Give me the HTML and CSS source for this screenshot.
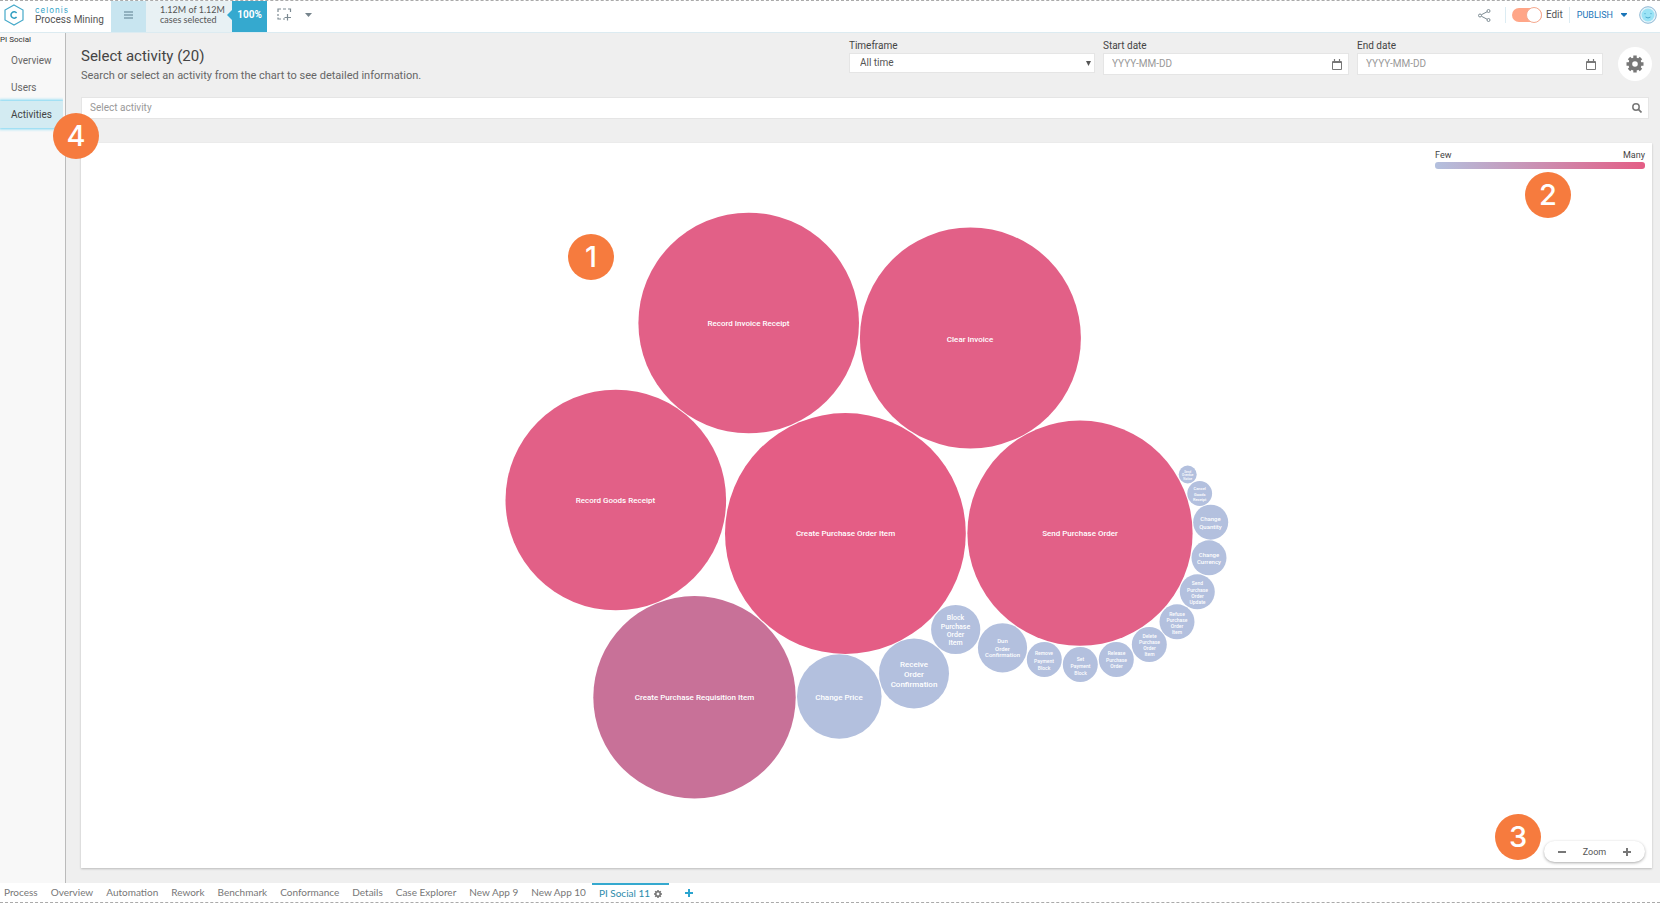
FILE: index.html
```html
<!DOCTYPE html>
<html lang="en">
<head>
<meta charset="utf-8">
<title>PI Social - Activities</title>
<link rel="stylesheet" href="styles.css">
</head>
<body>
<div class="app">
  <header class="topbar">
    <a class="brand" href="#">
      <svg class="brand-mark" viewBox="0 0 20 22" aria-hidden="true"><path d="M10 1 L19 6 V16 L10 21 L1 16 V6 Z" fill="none" stroke="#45a9c9" stroke-width="1.2"/><path d="M12.6 8.9 A3.2 3.2 0 1 0 12.6 13.1" fill="none" stroke="#2f9dc0" stroke-width="1.5"/></svg>
      <span class="brand-text"><span class="brand-name">celonis</span><span>Process Mining</span></span>
    </a>
    <button class="menu" aria-label="Menu"><svg width="9" height="8" viewBox="0 0 9 8"><path d="M0 1H9M0 4H9M0 7H9" stroke="#5b7f8e" stroke-width="1.2"/></svg></button>
    <div class="cases"><strong>1.12M of 1.12M</strong><span>cases selected</span></div>
    <div class="percent">100%</div>
    <button class="tool" aria-label="Selection"><svg width="15" height="13" viewBox="0 0 15 13"><path d="M1 4V1H4M6 1H9M11 1H13.500V4M1 6V8M1 9.500V11H4M6 11H8M10.500 6V12.500M7.500 9.500H14" fill="none" stroke="#7c8a92" stroke-width="1.200"/></svg></button>
    <button class="tool" aria-label="Selection options"><svg width="7" height="4" viewBox="0 0 7 4"><path d="M0 0H7L3.500 4Z" fill="#76848c"/></svg></button>
    <div class="top-actions">
      <button class="share" aria-label="Share"><svg width="13" height="13" viewBox="0 0 13 13"><path d="M3.500 5.700L9 2.800M3.500 7.300L9 10.200" stroke="#7c8a92"/><circle cx="2" cy="6.500" r="1.500" fill="none" stroke="#7c8a92"/><circle cx="10.500" cy="2" r="1.500" fill="none" stroke="#7c8a92"/><circle cx="10.500" cy="11" r="1.500" fill="none" stroke="#7c8a92"/></svg></button>
      <label class="edit"><input type="checkbox" checked><span>Edit</span></label>
      <button class="publish">PUBLISH <svg width="6" height="4" viewBox="0 0 6 4"><path d="M0 0H6V1L3 4L0 1Z" fill="#1a75b8"/></svg></button>
      <button class="avatar" aria-label="Account"><svg width="18" height="18" viewBox="0 0 18 18"><circle cx="9" cy="9" r="8.300" fill="#e4f3fa" stroke="#8fb8d4"/><circle cx="9" cy="9" r="6.500" fill="#9be3f5"/><path d="M6 7V8.200M12 7V8.200M6.500 11Q9 13 11.500 11" fill="none" stroke="#4ba9ce"/></svg></button>
    </div>
  </header>

  <div class="body">
    <nav class="side" aria-label="Sections">
      <span class="side-title">PI Social</span>
      <a href="#">Overview</a>
      <a href="#">Users</a>
      <a href="#" class="active" aria-current="page">Activities</a>
    </nav>

    <main class="main">
      <div class="heading">
        <div class="titles">
          <h1>Select activity (20)</h1>
          <p>Search or select an activity from the chart to see detailed information.</p>
        </div>
        <div class="filters">
          <div class="field"><label for="timeframe">Timeframe</label>
            <div class="box short"><select id="timeframe"><option>All time</option></select><svg width="5" height="5" viewBox="0 0 5 5"><path d="M0 0H5L2.500 5Z" fill="#555"/></svg></div></div>
          <div class="field"><label for="start">Start date</label>
            <div class="box"><input id="start" type="text" placeholder="YYYY-MM-DD"><svg width="10" height="11" viewBox="0 0 10 11"><path d="M.5 2.500H9.500V10.500H.5Z" fill="none" stroke="#777"/><path d="M.5 3.500H9.500M2.500 0V3M7.500 0V3" stroke="#777" stroke-width="1.200"/></svg></div></div>
          <div class="field"><label for="end">End date</label>
            <div class="box"><input id="end" type="text" placeholder="YYYY-MM-DD"><svg width="10" height="11" viewBox="0 0 10 11"><path d="M.5 2.500H9.500V10.500H.5Z" fill="none" stroke="#777"/><path d="M.5 3.500H9.500M2.500 0V3M7.500 0V3" stroke="#777" stroke-width="1.200"/></svg></div></div>
        </div>
        <button class="settings" aria-label="Settings"><svg width="18" height="18" viewBox="-9 -9 18 18"><circle r="4.700" fill="none" stroke="#777" stroke-width="3.800"/><path d="M0 -8.500V-5M0 5V8.500M-8.500 0H-5M5 0H8.500M-6 -6L-4 -4M4 4L6 6M-6 6L-4 4M4 -4L6 -6" stroke="#777" stroke-width="3.400"/></svg></button>
      </div>

      <div class="search">
        <input type="text" aria-label="Select activity" placeholder="Select activity">
        <svg width="10" height="10" viewBox="0 0 10 10"><circle cx="4" cy="4" r="3.200" fill="none" stroke="#777" stroke-width="1.500"/><path d="M6.400 6.400L9.500 9.500" stroke="#777" stroke-width="1.700"/></svg>
      </div>

      <section class="panel" aria-label="Activity chart">
        <svg class="chart" viewBox="81 144 1571 724" role="img" aria-label="Activities by frequency">
          <g class="many">
            <circle cx="748.700" cy="323.500" r="110.300"/><circle cx="970.400" cy="338.500" r="110.500"/>
            <circle cx="615.800" cy="500.500" r="110.300"/><circle class="top" cx="845.400" cy="534" r="120.400"/>
            <circle cx="1080" cy="533.700" r="112.600"/><circle class="mid" cx="694.500" cy="697.700" r="101.200"/>
          </g>
          <g class="few">
            <circle cx="839.300" cy="697" r="42.300"/><circle cx="914" cy="674" r="35"/>
            <circle cx="955.700" cy="630" r="24.600"/><circle cx="1002.500" cy="648.300" r="24.600"/>
            <circle cx="1044.300" cy="660" r="17.500"/><circle cx="1080.300" cy="665" r="17.500"/>
            <circle cx="1116.300" cy="660" r="17.500"/><circle cx="1149.300" cy="645" r="17.500"/>
            <circle cx="1177" cy="622.300" r="17.500"/><circle cx="1197.300" cy="592.300" r="17.500"/>
            <circle cx="1209" cy="558.300" r="17.500"/><circle cx="1210.700" cy="522.700" r="17.500"/>
            <circle cx="1199.700" cy="494" r="12.400"/><circle cx="1187.700" cy="475" r="9"/>
          </g>
          <g class="label l8">
            <text x="748.500" y="326">Record Invoice Receipt</text><text x="970" y="342">Clear Invoice</text>
            <text x="615.500" y="503">Record Goods Receipt</text><text x="845.500" y="536">Create Purchase Order Item</text>
            <text x="1080" y="536">Send Purchase Order</text><text x="694.500" y="700">Create Purchase Requisition Item</text>
            <text x="839" y="700">Change Price</text>
            <text x="914" y="667">Receive</text><text x="914" y="677">Order</text><text x="914" y="687">Confirmation</text>
          </g>
          <g class="label l7">
            <text x="955.500" y="620">Block</text><text x="955.500" y="629">Purchase</text><text x="955.500" y="637">Order</text><text x="955.500" y="645">Item</text>
          </g>
          <g class="label l6">
            <text x="1002.500" y="643">Dun</text><text x="1002.500" y="651">Order</text><text x="1002.500" y="657">Confirmation</text>
            <text x="1210.500" y="521">Change</text><text x="1210.500" y="529">Quantity</text>
            <text x="1209" y="557">Change</text><text x="1209" y="564">Currency</text>
          </g>
          <g class="label l5">
            <text x="1044" y="655">Remove</text><text x="1044" y="663">Payment</text><text x="1044" y="670">Block</text>
            <text x="1080.500" y="661">Set</text><text x="1080.500" y="668">Payment</text><text x="1080.500" y="675">Block</text>
            <text x="1116.500" y="655">Release</text><text x="1116.500" y="662">Purchase</text><text x="1116.500" y="668">Order</text>
            <text x="1149.500" y="638">Delete</text><text x="1149.500" y="644">Purchase</text><text x="1149.500" y="650">Order</text><text x="1149.500" y="656">Item</text>
            <text x="1177" y="616">Refuse</text><text x="1177" y="622">Purchase</text><text x="1177" y="628">Order</text><text x="1177" y="634">Item</text>
            <text x="1197.500" y="585">Send</text><text x="1197.500" y="592">Purchase</text><text x="1197.500" y="598">Order</text><text x="1197.500" y="604">Update</text>
          </g>
          <g class="label l4"><text x="1199.700" y="490">Cancel</text><text x="1199.700" y="496">Goods</text><text x="1199.700" y="501">Receipt</text></g>
          <g class="label l3"><text x="1187.700" y="473">Send</text><text x="1187.700" y="476">Overdue</text><text x="1187.700" y="480">Notice</text></g>
        </svg>
        <div class="legend"><div class="legend-labels"><span>Few</span><span>Many</span></div><div class="legend-bar"></div></div>
        <div class="zoom">
          <button aria-label="Zoom out"><svg width="8" height="8" viewBox="0 0 8 8"><path d="M0 4H8" stroke="#777" stroke-width="2"/></svg></button>
          <span>Zoom</span>
          <button aria-label="Zoom in"><svg width="8" height="8" viewBox="0 0 8 8"><path d="M0 4H8M4 0V8" stroke="#777" stroke-width="2"/></svg></button>
        </div>
        <span class="callout c1">1</span><span class="callout c2">2</span><span class="callout c3">3</span>
      </section>
    </main>
    <span class="callout c4">4</span>
  </div>

  <footer class="tabs">
    <a href="#">Process</a><a href="#">Overview</a><a href="#">Automation</a><a href="#">Rework</a><a href="#">Benchmark</a><a href="#">Conformance</a><a href="#">Details</a><a href="#">Case Explorer</a><a href="#">New App 9</a><a href="#">New App 10</a>
    <a href="#" class="active">PI Social 11 <svg width="8" height="8" viewBox="-4 -4 8 8"><circle r="2.300" fill="none" stroke="#777" stroke-width="1.700"/><path d="M0 -4V-2.500M0 2.500V4M-4 0H-2.500M2.500 0H4M-2.800 -2.800L-2 -2M2 2L2.800 2.800M-2.800 2.800L-2 2M2 -2L2.800 -2.800" stroke="#777" stroke-width="1.500"/></svg></a>
    <button aria-label="Add sheet"><svg width="8" height="8" viewBox="0 0 8 8"><path d="M0 4H8M4 0V8" stroke="#2ba4cf" stroke-width="2"/></svg></button>
  </footer>
</div>
</body>
</html>
```
FILE: styles.css
```css
* { box-sizing: border-box; }
body { margin: 0; font: 10px/12px Roboto, "Open Sans", sans-serif; color: #555; background: #fff; }
button, input, select { font: inherit; color: inherit; border: 0; padding: 0; margin: 0; background: none; outline: 0; }
a { color: inherit; text-decoration: none; }
svg { display: block; flex: none; }

.app { min-height: 100vh; display: flex; flex-direction: column; border-top: 1px dashed #aaa; border-bottom: 1px dashed #aaa; }

.topbar { display: flex; align-items: stretch; height: 32px; border-bottom: 1px solid #dcebf1; }
.brand { width: 111px; display: flex; align-items: center; gap: 11px; padding-left: 4px; padding-bottom: 3px; }
.brand-mark { width: 20px; height: 22px; }
.brand-text { display: flex; flex-direction: column; line-height: 10px; white-space: nowrap; }
.brand-name { font-family: "Inter", sans-serif; color: #35a5c9; letter-spacing: 1px; font-size: 8px; line-height: 9px; }
.menu { width: 35px; display: grid; place-items: center; padding-bottom: 3px; background: #c8e5f0; }
.cases { width: 86px; padding: 4px 0 0 14px; display: flex; flex-direction: column; background: #e8f1f4; line-height: 10px; white-space: nowrap; font-family: Lato, sans-serif; font-size: 9px; }
.cases strong { font-weight: 400; }
.percent { position: relative; width: 35px; display: grid; place-items: center; padding-bottom: 3px; background: #35a9cf; color: #fff; font-weight: 700; }
.percent::before { content: ""; position: absolute; left: -5px; top: 9px; border: 5px solid transparent; border-left: 0; border-right-color: #35a9cf; }
.tool { width: 24px; margin-left: 5px; display: grid; place-items: center; padding-bottom: 4px; }
.tool + .tool { margin-left: 0; }
.top-actions { margin-left: auto; display: flex; align-items: center; padding-right: 3px; padding-bottom: 3px; }
.share { margin-right: 14px; }
.edit { display: flex; align-items: center; gap: 4px; height: 16px; padding: 0 6px; border: solid #dcecf3; border-width: 0 1px; }
.edit input { appearance: none; width: 30px; height: 14px; border-radius: 7px; background: #ffa688; display: flex; justify-content: flex-end; align-items: center; }
.edit input::after { content: ""; width: 14px; height: 14px; border-radius: 50%; background: #fff; border: 1px solid #f5a98f; }
.publish { display: flex; align-items: center; gap: 8px; padding: 0 12px 0 7px; color: #1a75b8; font-size: 9px; }

.body { position: relative; flex: 1; display: flex; }
.side { width: 66px; flex: none; display: flex; flex-direction: column; background: #f8f8f8; border-right: 1px solid #bbb; }
.side-title { font-size: 8px; line-height: 14px; color: #333; }
.side a { height: 27px; line-height: 28px; padding-left: 11px; color: #666; }
.side a.active { background: #d3ebf2; color: #444; box-shadow: 0 0 3px 1px #6fd2f2; clip-path: inset(-4px 0); margin-right: 2px; }

.main { flex: 1; min-width: 0; display: flex; flex-direction: column; background: #efefef; padding: 6px 8px 15px 15px; }
.heading { display: flex; align-items: flex-start; }
.titles { flex: 1; padding-top: 8px; }
h1 { margin: 0; font-weight: 400; font-size: 15px; line-height: 18px; color: #444; }
p { margin: 0; padding-top: 4px; font-size: 11px; line-height: 14px; color: #666; }
.filters { width: 48%; display: flex; gap: 8px; }
.field { flex: 1; min-width: 0; }
.field label { display: block; line-height: 14px; color: #444; }
.box { height: 22px; display: flex; align-items: center; padding: 0 6px 0 8px; background: #fff; border: 1px solid #e5e5e5; }
.box.short { height: 20px; padding: 0 3px 0 10px; }
.box input, .box select { flex: 1; min-width: 0; appearance: none; }
::placeholder { color: #999; opacity: 1; }
.settings { width: 34px; height: 34px; margin: 8px 0 0 15px; border-radius: 50%; background: #fff; display: grid; place-items: center; }
.search { display: flex; align-items: center; height: 22px; margin: 14px 3px 24px 0; padding: 0 6px 0 8px; background: #fff; border: 1px solid #e5e5e5; }
.search input { flex: 1; }

.panel { position: relative; flex: 1; background: #fff; box-shadow: 0 1px 2px #bbb; }
.chart { position: absolute; inset: 0; width: 100%; height: 100%; }
.many { fill: #e26087; }
.many .top { fill: #e45d85; }
.many .mid { fill: #c87198; }
.few { fill: #b3c0de; }
.label { fill: #fff; text-anchor: middle; font-weight: 500; }
.l8 { font-size: 8px; }
.l7 { font-size: 7px; }
.l6 { font-size: 6px; }
.l5 { font-size: 5px; }
.l4 { font-size: 4px; }
.l3 { font-size: 3px; }
.legend { position: absolute; top: 6px; right: 7px; width: 210px; font-size: 9px; color: #444; }
.legend-labels { display: flex; justify-content: space-between; }
.legend-bar { height: 7px; margin-top: 1px; border-radius: 3px; background: linear-gradient(90deg, #b3c0de, #e45d85); }
.zoom { position: absolute; right: 7px; bottom: 6px; width: 101px; height: 21px; padding: 0 14px; display: flex; align-items: center; justify-content: space-between; border-radius: 11px; background: #fff; box-shadow: 0 1px 3px #aaa; font-size: 9px; }
.callout { position: absolute; width: 46px; height: 46px; border-radius: 50%; background: #f67b3e; color: #fff; display: grid; place-items: center; font: 500 29px/46px "Inter", sans-serif; }
.c1 { left: 487px; top: 91px; }
.c2 { right: 81px; top: 29px; }
.c3 { right: 111px; bottom: 8px; }
.c4 { left: 53px; top: 80px; }

.tabs { display: flex; height: 19px; padding-left: 4px; gap: 13px; white-space: nowrap; color: #777; background: #fff; font-family: Lato, sans-serif; }
.tabs a { line-height: 18px; border-top: 0 solid #35a9cf; }
.tabs a.active { display: flex; align-items: center; gap: 4px; padding: 0 7px; margin: 0 -7px; border-top-width: 2px; color: #2b8bab; line-height: 15px; }
.tabs button { margin-left: 10px; }
```
